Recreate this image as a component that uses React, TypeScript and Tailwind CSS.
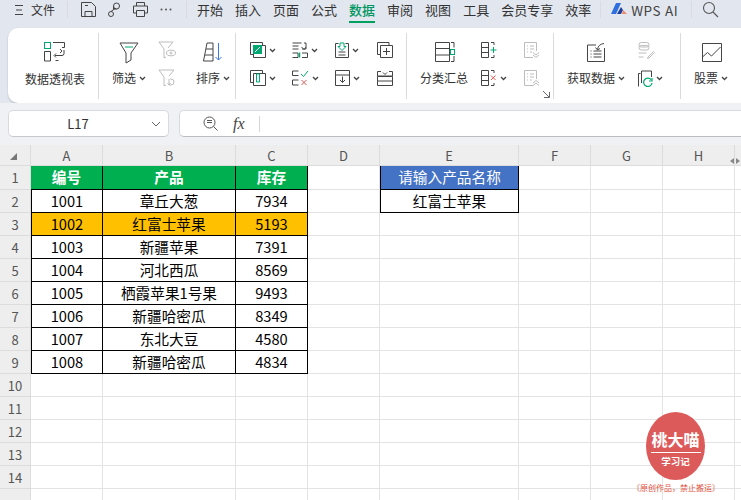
import React from "react";

const D = "#444444";
const L = "#bdbdbd";

function S({ w = 18, h = 18, children, className = "" }: { w?: number; h?: number; children: React.ReactNode; className?: string }) {
  return (
    <svg width={w} height={h} viewBox={`0 0 ${w} ${h}`} fill="none" stroke={D} strokeWidth="1" className={"block shrink-0 " + className}>
      {children}
    </svg>
  );
}

function Chev() {
  return (
    <svg width="7" height="5" viewBox="0 0 7 5" className="block shrink-0" fill="none" stroke="#444" strokeWidth="1.3">
      <path d="M1 1l2.5 2.5L6 1" />
    </svg>
  );
}

function Sep({ className = "" }: { className?: string }) {
  return <div className={"w-px shrink-0 bg-[#d9dbde] " + className} />;
}

function I({ children, chev = false, className = "" }: { children: React.ReactNode; chev?: boolean; className?: string }) {
  return (
    <div className={"h-[28px] flex items-center justify-start gap-[3px] " + className}>
      {children}
      {chev && <Chev />}
    </div>
  );
}

const Pivot = () => (
  <S w={22} h={20}>
    <rect x="0.5" y="0.5" width="6" height="6" stroke="#00a870" />
    <path d="M9 .5h11.5v5H18M.5 9.5v9.500h6V9.500zM20 8v3.500a2 2 0 0 1-2 2h-7M12 11.500l-2 2 2 2M14.500 18.500h-3M16 7l2 2-2 2" />
  </S>
);
const FilterBig = () => (
  <S w={20} h={22}>
    <path d="M1 1h18l-7 10v7l-5 3V11z" />
    <path d="M6 5h8" stroke="#00a870" />
  </S>
);
const FilterEye = () => (
  <S w={18} h={18}>
    <g stroke={L}>
      <path d="M1 1h14l-5 6v0M1 1l5 7v9l2-1" />
      <ellipse cx="13" cy="12" rx="4.500" ry="2.800" />
      <circle cx="13" cy="12" r="1" />
    </g>
  </S>
);
const FilterBack = () => (
  <S w={18} h={18}>
    <g stroke={L}>
      <path d="M1 1h15l-5 6M1 1l5 7v9l2-1" />
      <path d="M11 16h2a3 3 0 0 0 0-6h-1M11 10v6M9.500 14l1.500 2 1.500-2" />
    </g>
  </S>
);
const Sort = () => (
  <S w={20} h={20}>
    <path d="M4 1h6v18H.5zM3 7h7M2 13h8" />
    <path d="M15.500 1v17M12.500 15l3 3 3-3" stroke="#3b78e7" />
  </S>
);
const Sq1 = () => (
  <S w={16} h={16}>
    <path d="M3 12.500H.5V.5H12.500V3M3.500 3.500H15.500V15.500H3.500V3.500" />
    <rect x="3" y="3" width="9" height="9" fill="#00a870" stroke="none" />
    <path d="M5 10l5-5" stroke="#fff" />
  </S>
);
const Sq2 = () => (
  <S w={16} h={16}>
    <path d="M3 12.500H.5V.5H12.500V3M3.500 3.500H15.500V15.500H3.500V3.500" />
    <path d="M6.500 4v8h3V4z" stroke="#00a870" />
  </S>
);
const Merge1 = () => (
  <S w={16} h={16}>
    <path d="M.5 1h9M.5 4h6M.5 7h6M.500 15.500H6V11H.5M10 7h4V1h-2M9.500 5l2.500 2.500L14 5M10 11h5.500v4.500H10" />
    <path d="M7.500 10.500v5" stroke="#00a870" strokeWidth="1.500" />
  </S>
);
const CheckX = () => (
  <S w={17} h={16}>
    <path d="M6.500 1H.5v4.500h6M6.500 10H.5v5h6" />
    <path d="M9 4l2.500 2.500L16 1" stroke="#00a870" />
    <path d="M9.500 10l5 5M14.500 10l-5 5" stroke="#e0584f" />
  </S>
);
const DownDoc = () => (
  <S w={14} h={16}>
    <path d="M3.500 1.500H.5v14h13v-14h-3M3.500 10h7M3.500 13h7" />
    <path d="M5 1h4v3.500h2l-4 4-4-4h2z" stroke="#00a870" />
  </S>
);
const DownBox = () => (
  <S w={15} h={16}>
    <path d="M.5 5V.5h14V5zM.500 5v10.500h14V5" />
    <path d="M7.500 6.500v6M5 10l2.500 2.500L10 10" />
  </S>
);
const CopyPlus = () => (
  <S w={16} h={16}>
    <path d="M3 12.500H.5V.5H12V3M3.500 3.500H15.500V15.500H3.500zM9.500 6v7M6 9.500h7" />
  </S>
);
const Rows = () => (
  <S w={16} h={15}>
    <path d="M4 .5H.5V5h15V.5H12M.5 5.500h15M.5 10h15v4.500H.5zM.5 5.500V10M15.500 5.500V10M6 1.500L8 3.500l2-2" />
  </S>
);
const Sub = () => (
  <S w={20} h={20}>
    <path d="M.5.5h14v19H.5zM.5 6.500h14M.5 13h14M16 .5h3v5M19 14v5.500h-3" />
    <rect x="15.500" y="7.500" width="4" height="5" stroke="#00a870" strokeWidth="1" />
  </S>
);
const SubSm = ({ kind }: { kind: "plus" | "x" }) => (
  <S w={16} h={16}>
    <path d="M.5.5h7v15h-7zM.5 5.500h7M.5 10.500h7M10 .5h3V3M13 13v2.500h-3" />
    {kind === "plus" ? (
      <path d="M9.500 8h6M12.500 5v6" stroke="#00a870" />
    ) : (
      <path d="M10 5.500l4.500 4.500M14.500 5.500L10 10" stroke="#e0584f" />
    )}
  </S>
);
const DocArrow = ({ up }: { up?: boolean }) => (
  <S w={16} h={16}>
    <g stroke={L}>
      <path d="M9 15.500H.5V.5h12V9M3 4h1M6 4h4M3 7h1M6 7h4M3 10h1M6 10h2" />
      {up ? <path d="M9 13l3-2.500 3 2.500M9 15.500l3-2.500 3 2.500" /> : <path d="M9 10.500l3 2.500 3-2.500M9 13l3 2.500 3-2.500" />}
    </g>
  </S>
);
const GetData = () => (
  <S w={18} h={19}>
    <path d="M9 2H.5v16.500h17V5M3.500 8h1M6.500 8h8M3.500 11h1M6.500 11h8M3.500 14h1M6.500 14h8" />
    <path d="M17 .5C13 1 11 3 10.500 6.500M8.500 4.500l2 2.500 2.500-1.500" />
  </S>
);
const LinkEdit = () => (
  <S w={17} h={17}>
    <g stroke={L}>
      <rect x="1" y="0.5" width="10" height="4.500" rx="2.250" />
      <rect x="1" y="3.500" width="10" height="4.500" rx="2.250" />
      <path d="M.5 11h8M.5 15h5M10 15l5.500-5.500 1 1L11 16l-1.500.5z" />
    </g>
  </S>
);
const Refresh = () => (
  <S w={15} h={17}>
    <path d="M.5 16.500V3.500h2M3.500 1h10v6M3.500 1v12" />
    <path d="M13 9.500a4.200 4.200 0 1 0 1 3.500M14 8v3h-3" stroke="#00a870" strokeWidth="1.200" />
  </S>
);
const Stock = () => (
  <S w={20} h={19}>
    <path d="M.5.500h19v18H.5zM.5 14l5-4.500 4 3.500 9-9" />
  </S>
);

function Col({ w, children }: { w: string; children: React.ReactNode }) {
  return <div className={"flex flex-col shrink-0 pt-[3px] " + w}>{children}</div>;
}

const Txt = ({ children }: { children: React.ReactNode }) => <span className="text-[12px] text-[#333] whitespace-nowrap">{children}</span>;

const cols = ["A", "B", "C", "D", "E", "F", "G", "H"];
const data: [string, string, string][] = [
  ["1001", "章丘大葱", "7934"],
  ["1002", "红富士苹果", "5193"],
  ["1003", "新疆苹果", "7391"],
  ["1004", "河北西瓜", "8569"],
  ["1005", "栖霞苹果1号果", "9493"],
  ["1006", "新疆哈密瓜", "8349"],
  ["1007", "东北大豆", "4580"],
  ["1008", "新疆哈密瓜", "4834"],
];

function cellFor(r: number, c: number): { text: string; cls: string } {
  const base = "flex items-center justify-center overflow-hidden whitespace-nowrap border-b border-r";
  const light = "border-[#e3e3e3] bg-white";
  const inTable = r >= 1 && r <= 9 && c <= 2;
  if (r === 1 && c <= 2) {
    return { text: ["编号", "产品", "库存"][c], cls: `${base} border-black bg-[#00b050] text-white font-bold` };
  }
  if (inTable) {
    const row = data[r - 2];
    const bg = r === 3 ? "bg-[#ffc000]" : "bg-white";
    const left = c === 0 ? "border-l" : "";
    return { text: row[c], cls: `${base} ${left} border-black ${bg} text-black` };
  }
  if (r === 1 && c === 4) {
    return { text: "请输入产品名称", cls: `${base} border-l border-black bg-[#4472c4] text-white` };
  }
  if (r === 2 && c === 4) {
    return { text: "红富士苹果", cls: `${base} border-l border-black bg-white text-black` };
  }
  return { text: "", cls: `${base} ${light}` };
}

export default function App() {
  const rows = Array.from({ length: 15 }, (_, i) => i + 1);
  return (
    <div
      className="relative w-[741px] h-[500px] overflow-hidden bg-white text-[#333]"
      style={{ fontFamily: '"Noto Sans CJK SC", "Noto Sans", sans-serif' }}
    >
      <div className="h-[103px] bg-[#e2e6ee] overflow-hidden">
        {/* Title bar */}
        <div className="h-[28px] flex items-start text-[13px] leading-[20px] text-[#333] whitespace-nowrap">
          <svg width="9" height="10" viewBox="0 0 9 10" className="ml-[15px] mt-[5px]" stroke="#444" fill="none">
            <path d="M0 .5h8M1 5h6M0 9.500h8" />
          </svg>
          <span className="ml-[7px] text-[12px]">文件</span>
          <Sep className="ml-[12px] mt-[1px] h-[17px] bg-[#c8ccd2]" />
          <div className="ml-[13px] mt-[2px] flex items-center gap-[12px]">
            <S w={15} h={15}>
              <path d="M.5.5h10l4 4v10H.5zM4 14.500v-5h7v5M4 3.500h3" />
            </S>
            <S w={13} h={15}>
              <circle cx="8.500" cy="4" r="3" />
              <circle cx="3" cy="12" r="2.500" />
              <path d="M5.500 4v3h3M3 9.500l4-3" />
            </S>
            <S w={15} h={15}>
              <path d="M3.500 4V.5h8V4M3.500 11H.5V4h14v7h-3M3.500 8.500h8v6h-8z" />
            </S>
            <svg width="12" height="3" viewBox="0 0 12 3" className="block" fill="#555">
              <circle cx="1.500" cy="1.500" r="1" />
              <circle cx="6" cy="1.500" r="1" />
              <circle cx="10.500" cy="1.500" r="1" />
            </svg>
          </div>
          <Sep className="ml-[14px] mt-[1px] h-[17px] bg-[#c8ccd2]" />
          <div className="ml-[10px] flex gap-[12px]">
            <span>开始</span>
            <span>插入</span>
            <span>页面</span>
            <span>公式</span>
            <span className="relative text-[#00965f] font-medium">
              数据
              <span className="absolute left-0 right-0 top-[21px] h-[2px] bg-[#00a060]" />
            </span>
            <span>审阅</span>
            <span>视图</span>
            <span>工具</span>
            <span>会员专享</span>
            <span>效率</span>
          </div>
          <Sep className="ml-[9px] mt-[1px] h-[17px] bg-[#c8ccd2]" />
          <svg width="17" height="12" viewBox="0 0 17 12" className="ml-[10px] mt-[3px]">
            <path d="M5 0h5L5 11H0z" fill="#2f6fe0" />
            <path d="M6 11l4-7 2 3-2 4z" fill="#1c3f9e" />
            <path d="M12 7l4 4h-5z" fill="#f08a6c" />
          </svg>
          <span className="ml-[3px] w-[46px] text-[13.500px] tracking-[0.6px] text-[#444]">WPS AI</span>
          <Sep className="ml-[14px] mt-[1px] h-[17px] bg-[#c8ccd2]" />
          <svg width="17" height="17" viewBox="0 0 17 17" className="ml-[10px] mt-[1px]" fill="none" stroke="#555" strokeWidth="1.100">
            <circle cx="7" cy="7" r="5.500" />
            <path d="M11 11l5 5" />
          </svg>
        </div>

        {/* Ribbon */}
        <div className="ml-[8px] h-[75px] rounded-l-[10px] bg-white flex py-[5px] shadow-[0_1px_2px_rgba(0,0,0,0.2)]">
          <div className="w-[90px] shrink-0 flex flex-col items-center pl-[4px] pt-[9px] gap-[8px]">
            <Pivot />
            <Txt>数据透视表</Txt>
          </div>
          <Sep className="h-[66px]" />
          <div className="w-[136px] shrink-0 flex pl-[13px]">
            <Col w="w-[46px]">
              <I className="pl-[7px] mt-[3px] -mb-[3px]"><FilterBig /></I>
              <I chev><Txt>筛选</Txt></I>
            </Col>
            <Col w="w-[38px]">
              <I><FilterEye /></I>
              <I><FilterBack /></I>
            </Col>
            <Col w="w-[38px]">
              <I className="pl-[7px] mt-[2px] -mb-[2px]"><Sort /></I>
              <I chev><Txt>排序</Txt></I>
            </Col>
          </div>
          <Sep className="h-[66px]" />
          <div className="w-[170px] shrink-0 flex pl-[14px]">
            <Col w="w-[42px]">
              <I chev><Sq1 /></I>
              <I chev><Sq2 /></I>
            </Col>
            <Col w="w-[43px]">
              <I chev><Merge1 /></I>
              <I chev><CheckX /></I>
            </Col>
            <Col w="w-[42px]">
              <I chev><DownDoc /></I>
              <I chev><DownBox /></I>
            </Col>
            <Col w="w-[20px]">
              <I><CopyPlus /></I>
              <I><Rows /></I>
            </Col>
          </div>
          <Sep className="h-[66px]" />
          <div className="relative w-[146px] shrink-0 flex pl-[13px]">
            <Col w="w-[61px]">
              <I className="pl-[15px] mt-[2px] -mb-[2px]"><Sub /></I>
              <I><Txt>分类汇总</Txt></I>
            </Col>
            <Col w="w-[43px]">
              <I><SubSm kind="plus" /></I>
              <I chev><SubSm kind="x" /></I>
            </Col>
            <Col w="w-[20px]">
              <I><DocArrow /></I>
              <I><DocArrow up /></I>
            </Col>
            <svg width="7" height="7" viewBox="0 0 7 7" className="absolute right-[3px] bottom-[0px]" fill="none" stroke="#666">
              <path d="M0 0l6 6M1 6.500h5.500V1" />
            </svg>
          </div>
          <Sep className="h-[66px]" />
          <div className="w-[126px] shrink-0 flex pl-[13px]">
            <Col w="w-[71px]">
              <I className="pl-[20px] mt-[2px] -mb-[2px]"><GetData /></I>
              <I chev><Txt>获取数据</Txt></I>
            </Col>
            <Col w="w-[30px]">
              <I><LinkEdit /></I>
              <I chev><Refresh /></I>
            </Col>
          </div>
          <Sep className="h-[66px]" />
          <div className="pl-[13px] shrink-0">
            <Col w="w-[50px]">
              <I className="pl-[8px] mt-[2px] -mb-[2px]"><Stock /></I>
              <I chev><Txt>股票</Txt></I>
            </Col>
          </div>
        </div>
      </div>

      {/* Formula bar */}
      <div className="h-[42px] bg-[#eff1f5] flex items-start pt-[7px] pl-[8px]">
        <div className="w-[161px] h-[27px] rounded-[5px] bg-white border border-[#d8dade] border-b-[#c5c8cc] flex items-center relative">
          <span className="w-full text-center pr-[21px] text-[13px] text-[#333]">L17</span>
          <svg width="10" height="6" viewBox="0 0 10 6" className="absolute right-[7px] top-[10px]" fill="none" stroke="#666">
            <path d="M1 1l4 4 4-4" />
          </svg>
        </div>
        <div className="ml-[10px] flex-1 h-[27px] rounded-l-[5px] bg-white border-y border-l border-[#d8dade] border-b-[#bdbdbd] flex items-center">
          <svg width="15" height="15" viewBox="0 0 15 15" className="ml-[23px]" fill="none" stroke="#555">
            <circle cx="6.500" cy="6.500" r="5.500" />
            <path d="M4 6.500h5M4 4.500h5M10.500 10.500l4 4" />
          </svg>
          <span className="ml-[15px] w-[14px] text-[16px] italic text-[#444]" style={{ fontFamily: '"Liberation Serif", serif' }}>fx</span>
          <span className="ml-[12px] w-px h-[16px] bg-[#d5d5d5]" />
        </div>
      </div>

      {/* Sheet */}
      <div className="grid grid-cols-[31px_72px_133px_72px_72px_139px_72px_72px_72px_6px] grid-rows-[21px_24px_repeat(14,23px)] text-[14.670px] leading-none">
        <div className="bg-[#eeeeee] border-b border-r border-[#dcdcdc] relative">
          <svg width="7" height="7" viewBox="0 0 7 7" className="absolute left-[10px] bottom-[5px]">
            <path d="M7 0v7H0z" fill="#777" />
          </svg>
        </div>
        {cols.map((c) => (
          <div key={c} className="bg-[#eeeeee] border-b border-r border-[#dcdcdc] flex items-center justify-center text-[13px] text-[#555]">
            {c}
          </div>
        ))}
        <div className="bg-[#eeeeee] border-b border-[#dcdcdc] relative">
          <div className="absolute -left-[5px] top-[13px] flex gap-[2px]">
            <span className="w-0 h-0 border-y-[3px] border-y-transparent border-r-[4px] border-r-[#888]" />
            <span className="w-0 h-0 border-y-[3px] border-y-transparent border-l-[4px] border-l-[#888]" />
          </div>
        </div>
        {rows.map((r) => (
          <React.Fragment key={r}>
            <div className="bg-[#eeeeee] border-b border-r border-[#dcdcdc] flex items-center justify-center text-[13px] text-[#555]">
              {r < 15 ? r : ""}
            </div>
            {cols.map((_, c) => {
              const cell = cellFor(r, c);
              return (
                <div key={c} className={cell.cls}>
                  {cell.text}
                </div>
              );
            })}
            <div className="bg-white border-b border-[#e3e3e3]" />
          </React.Fragment>
        ))}
      </div>

      {/* Watermark */}
      <div className="absolute left-[646px] top-[412px] w-[59px] h-[68px] rounded-[50%] bg-[#dd5a5a] flex flex-col items-center text-white font-bold">
        <span className="mt-[18px] text-[16px] leading-[18px] whitespace-nowrap">桃大喵</span>
        <span className="mt-[4px] w-[50px] h-px bg-white" />
        <span className="mt-[2px] text-[9.500px] leading-[12px] whitespace-nowrap">学习记</span>
      </div>
      <div className="absolute left-[630px] top-[482px] w-[92px] text-center text-[8px] leading-[12px] text-[#e0503c] whitespace-nowrap">
        〔原创作品，禁止搬运〕
      </div>
    </div>
  );
}
